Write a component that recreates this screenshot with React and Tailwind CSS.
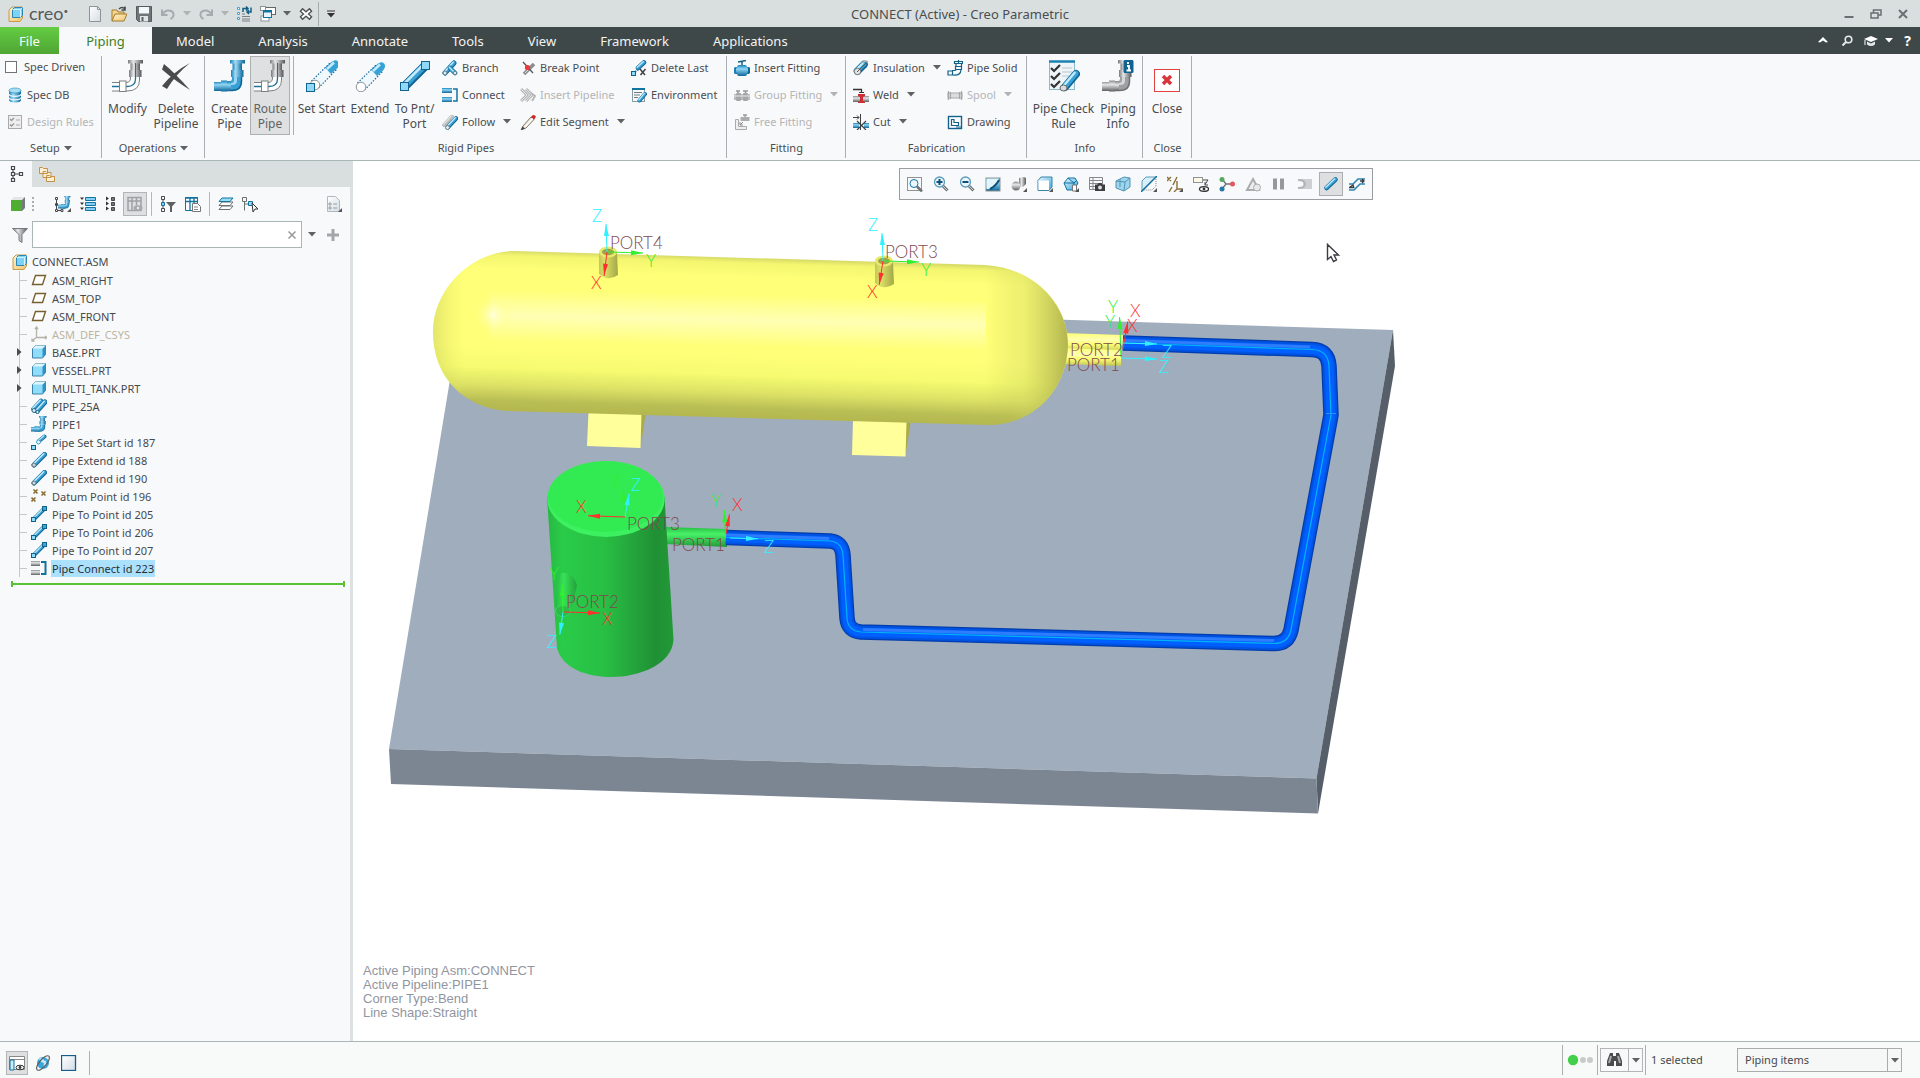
import React from "react";

const C = {
  blue: { d: "#0f6492", m: "#38a0d4", l: "#c4ebfc" },
  gray: { d: "#6f7274", m: "#9da0a2", l: "#eceeef" },
  dim: { d: "#a5a7a8", m: "#c3c5c6", l: "#eceded" },
};

function Svg({ n = 16, className = "w-4 h-4", children }) {
  return (
    <svg viewBox={`0 0 ${n} ${n}`} className={`${className} shrink-0`} fill="none" aria-hidden="true">
      {children}
    </svg>
  );
}
const Big = ({ children }) => (
  <Svg n={32} className="w-8 h-8">
    {children}
  </Svg>
);

function Tube({ x1, y1, x2, y2, w = 5, t = "blue", cap = "round" }) {
  const c = C[t];
  const o = w / 6;
  return (
    <g strokeLinecap={cap}>
      <line x1={x1} y1={y1} x2={x2} y2={y2} stroke={c.d} strokeWidth={w} />
      <line x1={x1 - o / 3} y1={y1 - o / 3} x2={x2 - o / 3} y2={y2 - o / 3} stroke={c.m} strokeWidth={w * 0.72} />
      <line x1={x1 - o} y1={y1 - o} x2={x2 - o} y2={y2 - o} stroke={c.l} strokeWidth={w * 0.28} />
    </g>
  );
}

function Defs() {
  return (
    <svg className="absolute w-0 h-0" aria-hidden="true">
      <defs>
        <linearGradient id="hb">
          <stop offset="0" stopColor="#1a7fb4" />
          <stop offset=".35" stopColor="#9fdcf7" />
          <stop offset="1" stopColor="#0d6799" />
        </linearGradient>
        <linearGradient id="hg">
          <stop offset="0" stopColor="#77797b" />
          <stop offset=".35" stopColor="#e6e7e8" />
          <stop offset="1" stopColor="#555759" />
        </linearGradient>
        <linearGradient id="vb" x2="0" y2="1">
          <stop offset="0" stopColor="#1a7fb4" />
          <stop offset=".35" stopColor="#8fd6f5" />
          <stop offset="1" stopColor="#0d6799" />
        </linearGradient>
        <linearGradient id="vg" x2="0" y2="1">
          <stop offset="0" stopColor="#8a8c8e" />
          <stop offset=".35" stopColor="#e6e7e8" />
          <stop offset="1" stopColor="#5d5f61" />
        </linearGradient>
        <linearGradient id="page" x2="1" y2="1">
          <stop offset="0" stopColor="#fff" />
          <stop offset="1" stopColor="#d3dde5" />
        </linearGradient>
        <linearGradient id="sky" x2="1" y2="1">
          <stop offset="0" stopColor="#e9f7fd" />
          <stop offset="1" stopColor="#35a5dc" />
        </linearGradient>
        <linearGradient id="gold" x2="1" y2="1">
          <stop offset="0" stopColor="#fff3d0" />
          <stop offset="1" stopColor="#f0c56c" />
        </linearGradient>
      </defs>
    </svg>
  );
}

/* ---- large ribbon icons ---- */
const Elbow = ({ t = "blue" }) => {
  const h = t === "blue" ? "url(#hb)" : "url(#hg)";
  const v = t === "blue" ? "url(#vb)" : "url(#vg)";
  const c = C[t];
  return (
    <>
      <path d="M18 17h10v4q0 10-10 10h-5V21h3q2 0 2-2z" fill={c.m} />
      <path d="M20 17h3v4q0 4-5 4h-5v-2h4q3 0 3-3z" fill={c.l} opacity=".7" />
      <path d="M27.500 17v4q0 9.500-10 9.500h-5" stroke={c.d} strokeWidth="1.500" />
      <path d="M0 22h8v9H0zM13 21.500h4V31h-4z" fill={v} />
      <rect x="7" y="20.500" width="6" height="11" fill={v} />
      <rect x="18.500" y="3" width="9.500" height="8" fill={h} />
      <rect x="17" y="10" width="12.500" height="7" fill={h} />
      <rect x="16" y="0" width="15" height="3.500" fill={h} />
    </>
  );
};
const ElbowOutline = () => (
  <>
    <path d="M18 14v4q0 4-4 4H0v9h15q13 0 13-11v-6z" fill="#fff" />
    <path d="M18.500 14v4q0 4.500-4.500 4.500H0M0 31h15q12.500 0 12.500-11v-6" stroke="#7d7f81" />
    <path d="M0 26.500h15q8.500 0 8.500-7.500V3" stroke="#1f7196" strokeWidth="1.300" />
    <rect x="7.500" y="21" width="6.500" height="10.500" fill="#fff" stroke="#7d7f81" />
    <rect x="18.500" y="3" width="9.500" height="8" fill="url(#hg)" />
    <rect x="17" y="10" width="12.500" height="7" fill="url(#hg)" />
    <rect x="16" y="0" width="15" height="3.500" fill="url(#hg)" />
    <path d="M23.500 3v14" stroke="#1f7196" />
  </>
);
const DeletePipeline = () => (
  <Big>
    <path d="M4 4Q15 13 30 30Q14 20 2 9.500Z" fill="#4a4b4d" />
    <path d="M30 3Q16 14 7 29L2 26Q13 12 30 3Z" fill="#4a4b4d" />
  </Big>
);
const ExtendShape = () => (
  <>
    <path d="M3 22L23 3q4-3 6.500-.5t0 6.500L10 29z" fill="#eef8fd" />
    <path d="M17 8.500L23.500 3q4-3 6.500-.5t-.5 6.500L23 15z" fill="#37a2d6" />
    <path d="M19 10L26 3.500" stroke="#c4ebfc" strokeWidth="2.500" />
    <path d="M3.500 22L22 4M10.500 29L29 10" stroke="#1f6fa3" strokeWidth="1.200" strokeDasharray="1.500 1.500" />
    <circle cx="7" cy="26" r="4.800" fill="#fff" stroke="#8b9398" />
  </>
);
const SetStart = () => (
  <Big>
    <g transform="translate(2 -1)">
      <ExtendShape />
    </g>
    <rect x=".5" y="23.500" width="8" height="8" fill="#8fd9fb" stroke="#12628c" />
  </Big>
);
const Extend = () => (
  <Big>
    <g transform="translate(0 1)">
      <ExtendShape />
    </g>
  </Big>
);
const ToPoint = () => (
  <>
    <Tube x1={7} y1={25} x2={26} y2={6} w={9} cap="butt" />
    <rect x="22.500" y="1.500" width="8" height="8" fill="#8fd9fb" stroke="#12628c" />
    <rect x="1.500" y="22.500" width="8" height="8" fill="#8fd9fb" stroke="#12628c" />
  </>
);
const PipeCheck = () => (
  <Big>
    <rect x="1.500" y="1.500" width="25" height="28" fill="#eef5f9" stroke="#8fb8cc" />
    <path d="M1 1.500h26" stroke="#1d82b3" strokeWidth="2.500" />
    <path d="M3 8l3 3 6-6M3 16l3 3 6-6M3 24l3 3 6-6" stroke="#333" strokeWidth="2.200" />
    <path d="M14 8h10M14 16h8M14 12h10" stroke="#b9c6cd" />
    <Tube x1={17} y1={27} x2={28} y2={14} w={8} />
    <ellipse cx="15.500" cy="28" rx="3.500" ry="3" fill="#d9dbdc" stroke="#666" />
  </Big>
);
const PipingInfo = () => (
  <Big>
    <Elbow t="gray" />
    <rect x="21.500" y="0" width="10" height="13" rx="1.500" fill="#0f6291" />
    <path d="M25 6h2v4.500M24.500 10.500h4.500M26 2v2" stroke="#fff" strokeWidth="1.800" />
  </Big>
);
const CloseBox = () => (
  <Big>
    <rect x="3.500" y="9.500" width="25" height="22" fill="#fff" stroke="#e2403f" />
    <path d="M12 16l8 8M20 16l-8 8" stroke="#d9363c" strokeWidth="3.500" />
  </Big>
);

/* ---- small ribbon icons ---- */
const sm = {
  db: (
    <Svg>
      <path d="M2 3v10q0 2.500 6 2.500t6-2.500V3z" fill="url(#hb)" />
      <ellipse cx="8" cy="3.500" rx="6" ry="2.500" fill="#a6def6" stroke="#2b86b3" strokeWidth=".6" />
      <path d="M2 7q0 2.300 6 2.300T14 7M2 10.500q0 2.300 6 2.300t6-2.300" stroke="#e9f6fc" strokeWidth="1.200" />
    </Svg>
  ),
  rules: (
    <Svg>
      <rect x="1.500" y="1.500" width="13" height="13" fill="#eee" stroke="#aaa" />
      <path d="M3 5l1.500 1.500L7 4M3 10.500L4.500 12 7 9.500" stroke="#999" strokeWidth="1.500" />
      <path d="M9 6h4M9 11h4" stroke="#aaa" />
    </Svg>
  ),
  branch: (
    <Svg>
      <Tube x1={3} y1={13} x2={12} y2={3} w={5} />
      <Tube x1={8} y1={8} x2={13} y2={13} w={4.500} />
      <circle cx="3" cy="13" r="2" fill="#dce9ef" stroke="#5c7d8d" />
      <circle cx="13" cy="13" r="1.800" fill="#dce9ef" stroke="#5c7d8d" />
    </Svg>
  ),
  connect: (
    <Svg>
      <rect x="0" y="1" width="10" height="5" fill="url(#vb)" />
      <rect x="0" y="10" width="10" height="5" fill="url(#vb)" />
      <path d="M11 2h4v12h-4" stroke="#12739f" strokeWidth="1.500" />
    </Svg>
  ),
  connectGray: (
    <Svg>
      <rect x="0" y="1" width="9" height="5" fill="url(#vg)" />
      <rect x="0" y="10" width="9" height="5" fill="url(#vg)" />
      <path d="M10 2h4.500v12H10" stroke="#12739f" strokeWidth="2" />
    </Svg>
  ),
  follow: (
    <Svg>
      <Tube x1={2} y1={11} x2={10} y2={2.500} w={3.500} t="dim" />
      <Tube x1={6} y1={13} x2={14} y2={4.500} w={4.500} />
      <circle cx="5.500" cy="13.500" r="2" fill="#e7edf0" stroke="#5c7d8d" />
    </Svg>
  ),
  breakPoint: (
    <Svg>
      <path d="M4 14L14 4" stroke="#8b8d8f" strokeWidth="3.500" />
      <path d="M3 2l10 11" stroke="#555" strokeWidth="1.300" />
      <path d="M5 13l3-3" stroke="#dcdcdc" />
      <circle cx="7.500" cy="7.500" r="2.600" fill="#f0383a" />
    </Svg>
  ),
  insertPipeline: (
    <Svg>
      <path d="M1 2l6 6-6 6M6 2l6 6-6 6" stroke="#b5b7b8" strokeWidth="3" />
      <path d="M1 2l6 6-6 6M6 2l6 6-6 6" stroke="#e4e5e5" />
      <path d="M11 6l4 3-3 5" stroke="#b5b7b8" strokeWidth="2" />
    </Svg>
  ),
  pencil: (
    <Svg>
      <path d="M3 12L11 3l3 2.500L6 14l-5 2z" fill="#e9e2d4" stroke="#6a5a4a" strokeWidth=".8" />
      <path d="M5 13l8-9" stroke="#fff" strokeWidth="1.200" />
      <path d="M1 16l1.500-3.500L5 14.500z" fill="#444" />
      <path d="M11 3q2-3 4-1.500T14 5.500z" fill="#c6282b" />
    </Svg>
  ),
  deleteLast: (
    <Svg>
      <Tube x1={7} y1={8} x2={13} y2={2.500} w={4.500} />
      <path d="M4 12l4-4" stroke="#2b7fae" strokeDasharray="1.500 1" strokeWidth="2" />
      <rect x=".5" y="11.500" width="4" height="4" fill="#8fd9fb" stroke="#12628c" />
      <path d="M9 9l5 6M14.500 9l-5 6" stroke="#3f4142" strokeWidth="1.500" />
    </Svg>
  ),
  environment: (
    <Svg>
      <rect x="1.500" y="1.500" width="12" height="13" fill="#f7fafb" stroke="#8b9ba3" />
      <path d="M1 2h13" stroke="#12739f" strokeWidth="2" />
      <path d="M3 5.500h8M3 8h6M3 10.500h4" stroke="#6c7a80" />
      <Tube x1={8.500} y1={13.500} x2={14} y2={7} w={4} />
    </Svg>
  ),
  insertFitting: (
    <Svg>
      <path d="M4 2l8-1.500M8 1v4" stroke="#155f86" strokeWidth="1.500" />
      <rect x="1" y="7" width="14" height="7" fill="url(#vb)" />
      <rect x="3" y="5" width="10" height="11" rx="2" fill="url(#vb)" />
      <rect x="0" y="7.500" width="2" height="6" fill="#1a7fb4" />
      <rect x="14" y="7.500" width="2" height="6" fill="#0d6799" />
    </Svg>
  ),
  groupFitting: (
    <Svg>
      <path d="M2 4h4M9 4h5M4 4v3M11.500 4v3" stroke="#999" strokeWidth="1.500" />
      <rect x="0" y="7" width="16" height="6" fill="#b9bbbc" />
      <rect x="2" y="6" width="5" height="8" rx="1" fill="#a5a7a8" />
      <rect x="9" y="6" width="5" height="8" rx="1" fill="#a5a7a8" />
      <path d="M0 9h16" stroke="#e8e8e8" />
    </Svg>
  ),
  freeFitting: (
    <Svg>
      <path d="M1.500 5.500h3v7h8v3h-11z" fill="#eee" stroke="#aaa" />
      <path d="M11 1v2M9 1h4" stroke="#999" strokeWidth="1.300" />
      <rect x="6.500" y="3" width="9" height="4" fill="#aaacad" />
      <path d="M6 8v3h3M6 11l3-3" stroke="#888" />
    </Svg>
  ),
  insulation: (
    <Svg>
      <Tube x1={4.500} y1={11} x2={11} y2={4.500} w={7.500} />
      <circle cx="4.500" cy="11.500" r="3.200" fill="#e4e7e9" stroke="#777" />
      <path d="M4 12L14 2" stroke="#555" />
      <path d="M8 3L13 1l2 1" stroke="#aab0b3" strokeWidth="1.500" />
    </Svg>
  ),
  weld: (
    <Svg>
      <path d="M0 2.500h8.500V6" stroke="#333" strokeWidth="1.300" />
      <path d="M6 5.500h5" stroke="#333" />
      <rect x="0" y="9" width="16" height="6" fill="url(#vg)" />
      <path d="M5 7h7v2l-2 1v4l2 1v1H5v-1l2-1v-4L5 9z" fill="#cf2f33" />
    </Svg>
  ),
  cut: (
    <Svg>
      <path d="M0 3.500h6M4 1.500l2 2-2 2M7.500 0v16" stroke="#3f4142" />
      <rect x="0" y="9" width="6" height="5" fill="url(#vb)" />
      <rect x="11" y="9" width="5" height="5" fill="url(#vb)" />
      <path d="M4 7l9 9M13 7l-9 9" stroke="#3f4142" strokeWidth="1.200" />
    </Svg>
  ),
  pipeSolid: (
    <Svg>
      <path d="M7.500 1.500h8v2h-8zM9 3.500v3h5.500v-3M8.500 6.500h6v3h-6zM9 9.500q0 1-2 1H5.500V15q8.500 1 8.500-5.500M1 11h4.500v4H1zM11.500 0v3" stroke="#12628c" strokeWidth="1.200" />
    </Svg>
  ),
  spool: (
    <Svg>
      <rect x="1" y="6" width="14" height="5" fill="#dcddde" stroke="#aaa" />
      <path d="M1.500 4v9M14.500 4v9M3.500 5v7M12.500 5v7" stroke="#a5a7a8" strokeWidth="1.200" />
    </Svg>
  ),
  drawing: (
    <Svg>
      <rect x="1.500" y="2.500" width="13" height="12" fill="#fff" stroke="#12628c" strokeWidth="1.400" />
      <path d="M4.500 5.500h2.500v3h4.500v3h-7zM9 13h5" stroke="#12628c" strokeWidth="1.200" />
    </Svg>
  ),
};

/* ---- ribbon building blocks ---- */
const Caret = ({ light }) => (
  <svg viewBox="0 0 8 5" className={`w-2 h-[5px] shrink-0 ${light ? "text-[#b0b2b3]" : "text-[#5f6162]"}`} aria-hidden="true">
    <path d="M0 0h8L4 4.500z" fill="currentColor" />
  </svg>
);

const Large = ({ icon, lines, w, active }) => (
  <button
    type="button"
    className={`mt-0.5 h-[79px] pt-[3px] flex flex-col items-center border shrink-0 text-xs ${w} ${
      active ? "bg-[#dfe0e1] border-[#adafb0] text-[#606364]" : "border-transparent"
    }`}
  >
    {icon}
    <span className="mt-[9px] leading-[15px] whitespace-nowrap">
      {lines.map((l) => (
        <span key={l} className="block">
          {l}
        </span>
      ))}
    </span>
  </button>
);

const Small = ({ icon, label, caret, off }) => (
  <button type="button" disabled={off} className={`h-[27px] flex items-center gap-1 whitespace-nowrap ${off ? "text-[#b3b5b6]" : ""}`}>
    {icon}
    <span>{label}</span>
    {caret && (
      <span className="ml-1">
        <Caret light={off} />
      </span>
    )}
  </button>
);

const Group = ({ name, w, caret, children }) => (
  <section className={`relative shrink-0 flex flex-col ${w}`} aria-label={name}>
    <div className="h-[83px] flex items-start">{children}</div>
    <div className="h-6 flex items-center justify-center gap-1">
      {name}
      {caret && <Caret />}
    </div>
    <span className="absolute right-0 top-0.5 bottom-0.5 w-px bg-[#aaaeb0]" />
  </section>
);
const Col = ({ w, children }) => <div className={`flex flex-col items-start shrink-0 ${w}`}>{children}</div>;

function Ribbon() {
  return (
    <div className="flex bg-[#f8f9fb] border-b border-[#a8b7b5] h-[107px]">
      <Group name="Setup" w="w-[102px]" caret>
        <div className="flex flex-col items-start pl-[5px]">
          <label className="h-[25px] flex items-center gap-[7px] whitespace-nowrap">
            <input type="checkbox" className="appearance-none w-3 h-3 border border-[#707476] bg-white" />
            Spec Driven
          </label>
          <div className="pl-0.5 pt-0.5">
            <Small icon={sm.db} label="Spec DB" />
            <Small icon={sm.rules} label="Design Rules" off />
          </div>
        </div>
      </Group>
      <Group name="Operations" w="w-[103px]" caret>
        <Large icon={<Big><ElbowOutline /></Big>} lines={["Modify"]} w="w-[51px]" />
        <Large icon={<DeletePipeline />} lines={["Delete", "Pipeline"]} w="w-[46px]" />
      </Group>
      <Group name="Rigid Pipes" w="w-[522px]">
        <div className="flex pl-1 h-full">
          <Large icon={<Big><Elbow /></Big>} lines={["Create", "Pipe"]} w="w-[41px]" />
          <Large icon={<Big><ElbowOutline /></Big>} lines={["Route", "Pipe"]} w="w-[40px]" active />
          <span className="w-px h-[79px] mt-0.5 ml-[3px] bg-[#aaaeb0]" />
          <Large icon={<SetStart />} lines={["Set Start"]} w="w-[55px]" />
          <Large icon={<Extend />} lines={["Extend"]} w="w-[42px]" />
          <Large icon={<Big><ToPoint /></Big>} lines={["To Pnt/", "Port"]} w="w-[47px]" />
        </div>
        <Col w="w-[78px] ml-1">
          <Small icon={sm.branch} label="Branch" />
          <Small icon={sm.connect} label="Connect" />
          <Small icon={sm.follow} label="Follow" caret />
        </Col>
        <Col w="w-[111px]">
          <Small icon={sm.breakPoint} label="Break Point" />
          <Small icon={sm.insertPipeline} label="Insert Pipeline" off />
          <Small icon={sm.pencil} label="Edit Segment" caret />
        </Col>
        <Col w="w-[92px]">
          <Small icon={sm.deleteLast} label="Delete Last" />
          <Small icon={sm.environment} label="Environment" />
        </Col>
      </Group>
      <Group name="Fitting" w="w-[119px]">
        <div className="pl-[7px]">
          <Small icon={sm.insertFitting} label="Insert Fitting" />
          <Small icon={sm.groupFitting} label="Group Fitting" caret off />
          <Small icon={sm.freeFitting} label="Free Fitting" off />
        </div>
      </Group>
      <Group name="Fabrication" w="w-[181px]">
        <div className="flex pl-[7px]">
          <Col w="w-[94px]">
            <Small icon={sm.insulation} label="Insulation" caret />
            <Small icon={sm.weld} label="Weld" caret />
            <Small icon={sm.cut} label="Cut" caret />
          </Col>
          <Col w="w-[79px]">
            <Small icon={sm.pipeSolid} label="Pipe Solid" />
            <Small icon={sm.spool} label="Spool" caret off />
            <Small icon={sm.drawing} label="Drawing" />
          </Col>
        </div>
      </Group>
      <Group name="Info" w="w-[116px]">
        <Large icon={<PipeCheck />} lines={["Pipe Check", "Rule"]} w="w-[73px]" />
        <Large icon={<PipingInfo />} lines={["Piping", "Info"]} w="w-[36px]" />
      </Group>
      <Group name="Close" w="w-[49px]">
        <Large icon={<CloseBox />} lines={["Close"]} w="w-[48px]" />
      </Group>
    </div>
  );
}

/* ---- title bar ---- */
const QBtn = ({ w = "w-6", label, children }) => (
  <button type="button" aria-label={label} className={`h-full flex items-center justify-center ${w}`}>
    {children}
  </button>
);
const AsmIcon = () => (
  <Svg>
    <path d="M1 4l3-3h10.500v11L12 15.500H1z" fill="url(#gold)" stroke="#c79a4e" />
    <path d="M4.500 3.500l2-2h8v8l-2 2h-8z" fill="#7fd2f7" stroke="#2e86b3" />
    <path d="M4.500 3.500h8v8M12.500 3.500l2-2" stroke="#d6f3fe" />
  </Svg>
);

function TitleBar() {
  return (
    <header className="h-[27px] bg-[#d9dfdf] grid grid-cols-[1fr_auto_1fr] items-center text-[#4a4e50]">
      <div className="flex h-full items-center pl-2">
        <AsmIcon />
        <span className="ml-[5px] w-[54px] text-[18px] leading-[24px] pb-0.5 font-['Lato'] text-[#555a5c]">creo<sup className="text-[8px] -top-1.5">•</sup></span>
        <QBtn label="New">
          <Svg>
            <path d="M2.500.5h8l3 3v12h-11z" fill="url(#page)" stroke="#8d9496" />
            <path d="M10.500.5v3h3" stroke="#8d9496" />
          </Svg>
        </QBtn>
        <QBtn label="Open">
          <Svg>
            <path d="M1 15V4h5l1 2h6v2" fill="#f6d68f" stroke="#a37a2c" />
            <path d="M1 15l3-7h12l-3 7z" fill="url(#gold)" stroke="#a37a2c" />
            <path d="M8 3q3-3 6 0M14 .5V4h-3.500" stroke="#44484a" strokeWidth="1.500" />
          </Svg>
        </QBtn>
        <QBtn label="Save" w="w-[25px]">
          <Svg>
            <path d="M.5.5h15v15h-13l-2-2z" fill="#6f7678" stroke="#565c5e" />
            <rect x="3" y="1" width="10" height="6.500" fill="#f4f8fa" />
            <rect x="4" y="10" width="8" height="5.500" fill="#e2e5e6" />
            <rect x="5.500" y="11" width="2" height="4" fill="#5a6062" />
          </Svg>
        </QBtn>
        <QBtn label="Undo">
          <Svg><path d="M2 3.500v5.500h5.500M2.500 8.500Q5 4 9 4.500q5 .5 4.500 5-.5 2.500-3 3.500" stroke="#a6acad" strokeWidth="2" /></Svg>
        </QBtn>
        <QBtn label="Undo history" w="w-[14px]"><Caret light /></QBtn>
        <QBtn label="Redo">
          <Svg><path d="M14 3.500v5.500H8.500M13.500 8.500Q11 4 7 4.500q-5 .5-4.500 5 .5 2.500 3 3.500" stroke="#a6acad" strokeWidth="2" /></Svg>
        </QBtn>
        <QBtn label="Redo history" w="w-[14px]"><Caret light /></QBtn>
        <QBtn label="Regenerate">
          <Svg>
            <path d="M1.500 1.500h2v2h-2zM1.500 6.500h2v2h-2zM1.500 11.500h2v2h-2z" fill="#fff" stroke="#4aa3cc" />
            <path d="M6 10.500h8M6 13h8M6 8h3M6 15h8" stroke="#7b8183" />
            <path d="M7 6V2.500h4M10 .5l2 2-2 2M15 1.500V6h-3M13 4l-2 2 2 2" stroke="#155f86" strokeWidth="1.500" />
          </Svg>
        </QBtn>
        <QBtn label="Windows">
          <Svg>
            <rect x="5.500" y="1.500" width="10" height="7" fill="#fff" stroke="#62686a" />
            <rect x="1" y="10" width="8" height="5" fill="#fff" stroke="#8d9496" />
            <rect x=".5" y=".5" width="5" height="4" fill="#fff" stroke="#8d9496" />
            <rect x="3.500" y="4.500" width="8" height="7" fill="#e5f5fc" stroke="#12739f" />
            <path d="M3 5.500h9" stroke="#12739f" strokeWidth="2" />
          </Svg>
        </QBtn>
        <QBtn label="Window list" w="w-[14px]"><Caret /></QBtn>
        <QBtn label="Close window">
          <Svg>
            <path d="M3 3.500l10 9M13 3.500l-10 9" stroke="#4a4e50" strokeWidth="4.500" />
            <path d="M4 4.500l8 7M12 4.500l-8 7" stroke="#fff" strokeWidth="2" />
          </Svg>
        </QBtn>
        <span className="w-px h-6 bg-[#a4abab]" />
        <QBtn label="Customize toolbar">
          <svg viewBox="0 0 10 8" className="w-2.5 h-2" aria-hidden="true"><path d="M1 1h8" stroke="#333" /><path d="M1 3h8L5 7.500z" fill="#333" /></svg>
        </QBtn>
      </div>
      <h1 className="text-[13px]">CONNECT (Active) - Creo Parametric</h1>
      <div className="flex h-full justify-end pr-1">
        <QBtn label="Minimize" w="w-[27px]"><svg viewBox="0 0 12 12" className="w-3 h-3"><path d="M1.500 9h9" stroke="#6a6f71" strokeWidth="2" /></svg></QBtn>
        <QBtn label="Restore" w="w-[27px]"><svg viewBox="0 0 12 12" className="w-3 h-3" fill="none" stroke="#6a6f71" strokeWidth="1.500"><path d="M1 5h7v5H1zM3.500 5V2H11v5H8" /></svg></QBtn>
        <QBtn label="Close" w="w-[27px]"><svg viewBox="0 0 12 12" className="w-3 h-3"><path d="M2 2l8 8M10 2l-8 8" stroke="#6a6f71" strokeWidth="2" /></svg></QBtn>
      </div>
    </header>
  );
}

function TabBar() {
  const tabs = ["Model", "Analysis", "Annotate", "Tools", "View", "Framework", "Applications"];
  return (
    <nav className="h-[27px] bg-[#3f4849] flex items-stretch text-[13px] text-[#f2f4f4]">
      <button type="button" className="w-[59px] bg-linear-to-b from-[#64cc42] to-[#4fa635] text-white">File</button>
      <button type="button" className="w-[93px] mr-0.5 bg-[#f8f9fb] text-[#3f7d24]">Piping</button>
      {tabs.map((t) => (
        <button type="button" key={t} className="px-[22px]">{t}</button>
      ))}
      <div className="ml-auto flex items-center text-white">
        <QBtn label="Collapse ribbon"><svg viewBox="0 0 12 12" className="w-3 h-3"><path d="M1 7l5-5 5 5-2 .5-3-2-3 2z" fill="#fff" /></svg></QBtn>
        <QBtn label="Search"><svg viewBox="0 0 12 12" className="w-3 h-3" fill="none" stroke="#e8ebeb" strokeWidth="1.600"><circle cx="7.500" cy="4.500" r="3.300" /><path d="M5 7L1.500 10.500" strokeWidth="2" /></svg></QBtn>
        <QBtn label="Learning"><svg viewBox="0 0 14 12" className="w-3.5 h-3"><path d="M7 1l7 3-7 3-7-3z" fill="#fff" /><path d="M3 6.500v3q4 3 8 0v-3L7 8.500z" fill="#e3e6e6" /><path d="M1 5v5" stroke="#fff" /></svg></QBtn>
        <QBtn label="Learning options" w="w-3"><svg viewBox="0 0 8 5" className="w-2 h-[5px]"><path d="M0 0h8L4 4.500z" fill="#fff" /></svg></QBtn>
        <QBtn label="Help" w="w-[25px]"><b className="text-sm">?</b></QBtn>
      </div>
    </nav>
  );
}

/* ---- model tree ---- */
const PlaneIcon = () => <Svg><path d="M4.500 3.500h10L11.500 12.500h-10z" fill="#fff" stroke="#77602f" strokeWidth="1.400" /></Svg>;
const CsysIcon = () => <Svg><path d="M5.500 1v10.500H16M5.500 11.500L.5 15M4 3l1.500-2L7 3M14 10l2 1.500-2 1.500M1 12.500V15h2.500" stroke="#b3b1a8" strokeWidth="1.300" /></Svg>;
const PartIcon = () => (
  <Svg>
    <path d="M1.500 4.500l3-3h10v9l-3 3.500h-10z" fill="#8fdcfb" stroke="#3b83a6" />
    <path d="M11.500 4.500l3-3v9l-3 3.500z" fill="#2e94c6" />
    <path d="M1.500 4.500l3-3h10l-3 3z" fill="#dff5fe" />
  </Svg>
);
const Pipe25 = () => (
  <Svg>
    <Tube x1={2.500} y1={11} x2={10} y2={3} w={4.500} />
    <Tube x1={6} y1={13} x2={14} y2={4} w={5} />
    <circle cx="3" cy="12.500" r="2" fill="#d8ecf5" stroke="#25688a" />
    <circle cx="6.500" cy="14" r="1.600" fill="#d8ecf5" stroke="#25688a" />
  </Svg>
);
const TreeExtend = () => (
  <Svg>
    <Tube x1={3} y1={13} x2={13.500} y2={2.500} w={5} />
    <circle cx="3" cy="13" r="2" fill="#c9d3d8" stroke="#6a7a82" />
  </Svg>
);
const TreeStart = () => (
  <Svg>
    <Tube x1={8} y1={7} x2={13.500} y2={2.500} w={4} />
    <circle cx="7.500" cy="8" r="2" fill="#e3f4fb" stroke="#4a9cc4" />
    <rect x=".5" y="11.500" width="4" height="4" fill="#8fd9fb" stroke="#12628c" />
  </Svg>
);
const TreeToPoint = () => (
  <Svg>
    <Tube x1={3} y1={13} x2={13} y2={3} w={4} cap="butt" />
    <rect x=".5" y="11.500" width="4" height="4" fill="#8fd9fb" stroke="#12628c" />
    <rect x="11.500" y=".5" width="4" height="4" fill="#3fa6d8" stroke="#12628c" />
  </Svg>
);
const DatumPts = () => <Svg><path d="M2.500 1.500l4 4M6.500 1.500l-4 4M10.500 3.500l4 4M14.500 3.500l-4 4M.5 9.500l4 4M4.500 9.500l-4 4" stroke="#8a6f35" strokeWidth="1.600" /></Svg>;
const TreePipe = () => <Svg n={32}><Elbow /></Svg>;

const nodes = [
  ["ASM_RIGHT", <PlaneIcon />],
  ["ASM_TOP", <PlaneIcon />],
  ["ASM_FRONT", <PlaneIcon />],
  ["ASM_DEF_CSYS", <CsysIcon />, "dim"],
  ["BASE.PRT", <PartIcon />, "open"],
  ["VESSEL.PRT", <PartIcon />, "open"],
  ["MULTI_TANK.PRT", <PartIcon />, "open"],
  ["PIPE_25A", <Pipe25 />],
  ["PIPE1", <TreePipe />],
  ["Pipe Set Start id 187", <TreeStart />],
  ["Pipe Extend id 188", <TreeExtend />],
  ["Pipe Extend id 190", <TreeExtend />],
  ["Datum Point id 196", <DatumPts />],
  ["Pipe To Point id 205", <TreeToPoint />],
  ["Pipe To Point id 206", <TreeToPoint />],
  ["Pipe To Point id 207", <TreeToPoint />],
  ["Pipe Connect id 223", sm.connectGray, "sel"],
];

const PBtn = ({ label, w = "w-6", active, children }) => (
  <button
    type="button"
    aria-label={label}
    className={`h-6 flex items-center justify-center shrink-0 border ${w} ${active ? "bg-[#dedfe1] border-[#b3b5b7]" : "border-transparent"}`}
  >
    {children}
  </button>
);
const Corner = () => <path d="M16 12v4h-4z" fill="#555" />;

function SidePanel() {
  return (
    <aside className="w-[353px] shrink-0 bg-[#f8f9fb] border-r-[3px] border-[#dbe2e1] flex flex-col">
      <div className="flex h-[26px] bg-[#d9dfdf] -mr-[3px]">
        <button type="button" aria-label="Model tree" className="w-8 bg-[#f8f9fb] flex items-center justify-center">
          <Svg>
            <path d="M3.500.5h3v3h-3zM3.500 6.500h3v3h-3zM3.500 12.500h3v3h-3zM11.500 6.500h3v3h-3zM5 3.500v3M5 9.500v3M6.500 8h5" stroke="#44484a" strokeWidth="1.200" />
          </Svg>
        </button>
        <button type="button" aria-label="Folder browser" className="w-[30px] flex items-center justify-center">
          <Svg>
            <path d="M.5 1.500h3l1 1h4v5h-8zM4 5.500h3l1 1h4v5H4zM7.500 9.500h3l1 1h4v5h-8z" fill="#fdf0d4" stroke="#c39045" />
          </Svg>
        </button>
      </div>
      <div className="flex h-[34px] items-center pl-[6px] pr-1">
        <PBtn label="Display"><Svg><path d="M1 4h11v11H1z" fill="#4fae31" /><path d="M1 4l3-3h11l-3 3z" fill="#e3e5e6" /><path d="M12 4l3-3v11l-3 3z" fill="#75797b" /></Svg></PBtn>
        <span className="w-1.5 flex justify-center"><svg viewBox="0 0 2 16" className="w-0.5 h-4"><path d="M1 1v15" stroke="#a9adae" strokeWidth="2" strokeDasharray="2 2" /></svg></span>
        <span className="w-[15px]" />
        <PBtn label="Piping tree">
          <Svg>
            <path d="M.5 1.500h2v2h-2zM.5 7.500h2v2h-2zM.5 13.500h2v2h-2zM6 13.500h2v2H6zM1.500 3.500v10M2.500 14.500H6" stroke="#44484a" />
            <g transform="translate(3 0) scale(.4)"><Elbow /></g>
            <Corner />
          </Svg>
        </PBtn>
        <PBtn label="Expand all" w="w-[26px]"><Svg><path d="M5.500 1.500h10v3h-10zM5.500 6.500h10v3h-10zM5.500 11.500h10v3h-10z" fill="#7fd0f4" stroke="#12739f" /><path d="M0 1.500h4L2 4zM0 6.500h4L2 9zM0 11.500h4L2 14z" fill="#333" /></Svg></PBtn>
        <PBtn label="Collapse all" w="w-[22px]"><Svg><path d="M7.500 1.500h3v3h-3zM7.500 6.500h3v3h-3zM7.500 11.500h3v3h-3z" fill="#777" stroke="#44484a" /><path d="M2 .5l3 2-3 2zM2 5.500l3 2-3 2zM2 10.500l3 2-3 2z" fill="#333" /></Svg></PBtn>
        <PBtn label="Show columns" active><Svg><path d="M1 1.500h13v13H1zM1 5h13M5 1.500v13M9.500 1.500v8" stroke="#9fa2a4" strokeWidth="1.500" /><ellipse cx="11" cy="12" rx="4.500" ry="2.800" fill="#a6a9ab" /><circle cx="11" cy="12" r="1.200" fill="#eee" /></Svg></PBtn>
        <span className="w-px h-6 bg-[#b3b8ba] mx-1" />
        <PBtn label="Tree filters"><Svg><path d="M1.500.5h3v3h-3zM1.500 12.500h3v3h-3zM3 3.500v3M3 9.500v3" stroke="#44484a" /><path d="M1.500 6.500h3v3h-3z" fill="#7fd0f4" stroke="#12739f" /><path d="M6 6h10l-4 4.500V16h-2v-5.500z" fill="#5d6163" /></Svg></PBtn>
        <PBtn label="Tree columns" w="w-[26px]"><Svg><path d="M.5 1.500h12v13H.5z" fill="#fff" stroke="#12739f" /><path d="M0 2h13M.5 5.500h12M5 2v13M9 2v13" stroke="#12739f" strokeWidth="1.300" /><path d="M7.500 7.500h5l3 3v5h-8z" fill="#fff" stroke="#777" /><path d="M9 11h4M9 13.500h4" stroke="#888" /></Svg></PBtn>
        <span className="w-px h-6 bg-[#b3b8ba] mr-1 ml-[3px]" />
        <PBtn label="Layers"><Svg><path d="M1 13.500l3-3.500h11l-3 3.500zM1 9.500L4 6h11l-3 3.500z" fill="#fff" stroke="#6b7072" /><path d="M1 5.500L4 2h11l-3 3.500z" fill="#9bdcf7" stroke="#12739f" /></Svg></PBtn>
        <PBtn label="Select"><Svg><path d="M.5 1.500h4v4h-4zM2.500 5.500v9M2.500 8h4" stroke="#6b7072" /><path d="M6.500 5.500h4v4h-4z" fill="#9bdcf7" stroke="#12739f" /><path d="M10 7l6 6h-3l-2 3z" fill="#fff" stroke="#333" /></Svg></PBtn>
        <span className="grow" />
        <PBtn label="Settings"><Svg><path d="M1.500.5h8l4 4v11h-12z" fill="url(#page)" stroke="#b0b8bc" /><path d="M3 7h2v2H3zM3 11h2v2H3zM7 8h4M7 12h4" stroke="#9aa1a5" /><Corner /></Svg></PBtn>
      </div>
      <div className="flex items-center h-[27px] pl-3 pr-2.5">
        <Svg className="w-4 h-4 mr-1"><path d="M.5 1.500h15l-5.500 6v8l-3-2v-6z" fill="url(#hg)" stroke="#777b7d" /></Svg>
        <div className="flex grow items-center border border-[#a8b7b5] bg-white h-[27px] mr-1">
          <input type="text" aria-label="Filter tree" className="grow min-w-0 h-full px-1 outline-none" />
          <button type="button" aria-label="Clear" className="w-3.5 flex"><svg viewBox="0 0 10 10" className="w-2.5 h-2.5"><path d="M1.500 1.500l7 7M8.500 1.500l-7 7" stroke="#999" strokeWidth="1.500" /></svg></button>
        </div>
        <QBtn label="Filter options" w="w-[11px]"><Caret /></QBtn>
        <span className="w-2" />
        <QBtn label="Add filter" w="w-[15px]"><svg viewBox="0 0 12 12" className="w-3 h-3"><path d="M6 0v12M0 6h12" stroke="#a3a6a8" strokeWidth="3" /></svg></QBtn>
      </div>
      <ul className="mt-[5px] text-[#47494b]">
        <li className="h-[18px] flex items-center pl-3 gap-1"><AsmIcon />CONNECT.ASM</li>
        {nodes.map(([t, icon, k]) => (
          <li key={t} className="h-[18px] flex items-center pl-[19px] whitespace-nowrap">
            <span className="w-2 h-full border-l border-[#c5c7c8] flex items-center">
              {k === "open" ? (
                <svg viewBox="0 0 5 8" className="w-[5px] h-2 -ml-[3px]"><path d="M0 0v8l4.500-4z" fill="#4a4d4f" /></svg>
              ) : (
                <span className="w-2 h-px bg-[#c5c7c8]" />
              )}
            </span>
            <span className="w-1" />
            {icon}
            <span className={`ml-1 px-px h-[17px] leading-[17px] ${k === "dim" ? "text-[#bbb59f]" : ""} ${k === "sel" ? "bg-[#ace1fd] text-[#26303a]" : ""}`}>{t}</span>
          </li>
        ))}
      </ul>
      <div className="mt-1 ml-[11px] mr-[5px] h-1.5 flex items-center border-x-2 border-[#5bc238]"><span className="h-0.5 w-full bg-[#5bc238]" /></div>
    </aside>
  );
}

/* ---- graphics area ---- */
const Mag = ({ sign }) => (
  <Svg>
    <path d="M9.500 9.500l5 5" stroke="#6d7275" strokeWidth="3" />
    <path d="M10 10l4.500 4.500" stroke="#cfd3d5" />
    <circle cx="6.500" cy="6" r="5" fill="#eaf6fc" stroke="#5d9dbb" strokeWidth="1.300" />
    <path d={sign === "+" ? "M3.500 6h6M6.500 3v6" : "M3.500 6h6"} stroke="#0f4f78" strokeWidth="2" />
  </Svg>
);
const viewTools = [
  ["Refit", <Svg><rect x=".5" y="1.500" width="14" height="13" stroke="#8d9396" /><circle cx="7" cy="7.500" r="4" fill="#eaf6fc" stroke="#12739f" /><path d="M10 10.500l5 5" stroke="#6d7275" strokeWidth="2.500" /></Svg>],
  ["Zoom In", <Mag sign="+" />],
  ["Zoom Out", <Mag sign="-" />],
  ["Repaint", <Svg><rect x="1" y="2" width="14" height="13" fill="url(#vb)" stroke="#8d9396" /><path d="M1.500 2.500H14Q12 14 1.500 13z" fill="#e3f4fb" /><path d="M5 13Q11 10 14 4" stroke="#0f4f78" strokeWidth="2" /></Svg>],
  ["Rendering", <Svg><path d="M8 2l5-1 2 1v6l-3 3-4-1z" fill="url(#hg)" /><circle cx="5" cy="10" r="4.500" fill="url(#vg)" /><Corner /></Svg>],
  ["Display Style", <Svg><path d="M1 4.500L4 1h11v10l-3 3.500H1z" fill="url(#sky)" stroke="#3b83a6" /><path d="M1.500 4.500H12V14H1.500z" fill="#fff" /><Corner /></Svg>],
  ["Saved Orientations", <Svg><path d="M1 7l4-5h7l3 5-4 7H4z" fill="url(#sky)" stroke="#12739f" /><path d="M1 7h10l3-3M5 2l6 5v6" stroke="#12739f" /><path d="M9.500 9h4v6h-4z" fill="#fff" stroke="#777" /><Corner /></Svg>],
  ["View Manager", <Svg><path d="M.5 1.500h13v12H.5zM.5 4.500h13M.5 7.500h13M.5 10.500h8M4 1.500v12" stroke="#85898b" /><path d="M6 8.500h2.500l1-1.500h3l1 1.500H16v6.500H6z" fill="#3b3e40" /><circle cx="11" cy="11.500" r="2" fill="#ddd" /></Svg>],
  ["Perspective", <Svg><path d="M1 5l8-4 6 1v9l-6 4-8-3z" fill="#9fd4ec" stroke="#4f94b4" /><path d="M1 5l9 1 5-4M10 6l-1 9M5 3v8" stroke="#4f94b4" /></Svg>],
  ["Sections", <Svg><path d="M1 5l4-4h10L1 15z" fill="#d8effa" stroke="#5d9dbb" /><path d="M15 1v9l-4 4H1z" stroke="#888" strokeDasharray="1 1" /><path d="M0 16L16 0" stroke="#12739f" strokeWidth="1.500" /><Corner /></Svg>],
  ["Datum Display", <Svg><path d="M0 1l4 4M4 1L0 5M10 1L6 9M5 11l-3 5M10 5v8h5M10 13l-3 3" stroke="#8a6f35" strokeWidth="1.400" /><Corner /></Svg>],
  ["Annotation Display", <Svg><rect x=".5" y="1.500" width="9" height="5" fill="#fff8e4" stroke="#8d9396" /><path d="M10 4h5L12 8.500M12 6v3h3" stroke="#44484a" /><ellipse cx="11" cy="13" rx="4.500" ry="2.300" fill="#fff" stroke="#333" strokeWidth="1.300" /><circle cx="11" cy="13" r="1.400" fill="#333" /></Svg>],
  ["Spin Center", <Svg><path d="M3 3l4 5h7M7 8l-4 5" stroke="#6d7275" strokeWidth="1.300" /><circle cx="3" cy="3.500" r="2.500" fill="#55a85c" /><circle cx="13.500" cy="8" r="2.500" fill="#e0595d" /><circle cx="3" cy="13" r="2.500" fill="#2878a8" /></Svg>],
  ["Simulate", <Svg><path d="M8 3l6 11H2z" fill="#eee" stroke="#aaadaf" strokeWidth="2" /><circle cx="12" cy="11.500" r="3.500" fill="#e8e8e8" stroke="#aaadaf" /></Svg>],
  ["Pause", <Svg><path d="M2 2.500h4v11H2zM9 2.500h4v11H9z" fill="#96999b" /></Svg>],
  ["Stop", <Svg><path d="M1 3h14v10H1l5-2V6z" fill="#cdd0d1" /><path d="M1 4q7 0 7 4t-7 4" stroke="#b3b6b8" strokeWidth="2" /></Svg>],
  ["Solid Pipe", <Svg><Tube x1={3.500} y1={12} x2={12.500} y2={3.500} w={4.500} /></Svg>],
  ["Flow Direction", <Svg><path d="M0 8h4l5-5h7M0 14h5l6-6h5" stroke="#2c86b5" strokeWidth="1.600" /><path d="M1 11l3-2 1 3M5 11.500H0M11 5h4M13 3l2 2-2 2" stroke="#3b3e40" strokeWidth="1.300" /></Svg>],
];

const Arrow = ({ x, y, a, c, n = 34 }) => (
  <g transform={`translate(${x} ${y}) rotate(${a})`}>
    <path d={`M0 0H${n}`} stroke={c} />
    <path d={`M${n - 12} -2.500L${n} 0L${n - 12} 2.500z`} fill={c} />
  </g>
);
const R = "#ff3030", G = "#30f030", Z = "#30f0ff", M = "#7d4a50";
const T = ({ x, y, c, children }) => (
  <text x={x} y={y} fill={c}>{children}</text>
);

const run = "M726 537.500L830 541Q842 542 843 555L847 618Q848 631 861 632L1274 643.500Q1288 643.500 1291 630L1331 415L1329 366Q1328 350 1312 349.500L1123 343";

function Scene() {
  return (
    <svg viewBox="353 161 1567 880" preserveAspectRatio="xMinYMin meet" className="absolute inset-0 w-full h-full" role="img" aria-label="Piping assembly model" fill="none">
      <defs>
        <linearGradient id="ves" gradientUnits="userSpaceOnUse" x1="515" y1="251" x2="510" y2="411">
          <stop offset="0" stopColor="#d8dc66" />
          <stop offset=".03" stopColor="#f4f670" />
          <stop offset=".12" stopColor="#ffff78" />
          <stop offset=".6" stopColor="#ffff78" />
          <stop offset=".73" stopColor="#f6fb70" />
          <stop offset=".84" stopColor="#dde266" />
          <stop offset=".94" stopColor="#b8bd54" />
          <stop offset="1" stopColor="#b3b74e" />
        </linearGradient>
        <linearGradient id="shine" gradientUnits="userSpaceOnUse" x1="515" y1="290" x2="514" y2="342">
          <stop offset="0" stopColor="#ffffb8" stopOpacity="0" />
          <stop offset=".5" stopColor="#ffffb4" />
          <stop offset="1" stopColor="#ffffb8" stopOpacity="0" />
        </linearGradient>
        <radialGradient id="spot"><stop offset="0" stopColor="#ffffd8" /><stop offset="1" stopColor="#ffff80" stopOpacity="0" /></radialGradient>
        <linearGradient id="capR">
          <stop offset="0" stopColor="#b3b74e" stopOpacity="0" />
          <stop offset=".45" stopColor="#c6cb5a" stopOpacity=".3" />
          <stop offset="1" stopColor="#aeb24c" />
        </linearGradient>
        <linearGradient id="capL">
          <stop offset="0" stopColor="#c0c556" stopOpacity=".5" />
          <stop offset="1" stopColor="#e0e468" stopOpacity="0" />
        </linearGradient>
        <linearGradient id="port"><stop offset="0" stopColor="#c4c85a" /><stop offset=".3" stopColor="#dde066" /><stop offset="1" stopColor="#a3a746" /></linearGradient>
        <linearGradient id="noz" x2="0" y2="1"><stop offset="0" stopColor="#fdff74" /><stop offset=".35" stopColor="#ffffb0" /><stop offset=".6" stopColor="#fcff74" /><stop offset="1" stopColor="#c0c456" /></linearGradient>
        <linearGradient id="tank"><stop offset="0" stopColor="#27b842" /><stop offset=".12" stopColor="#2acb49" /><stop offset=".45" stopColor="#28bf44" /><stop offset=".68" stopColor="#24a53c" /><stop offset=".86" stopColor="#209034" /><stop offset="1" stopColor="#229a38" /></linearGradient>
        <linearGradient id="stub"><stop offset="0" stopColor="#27b842" /><stop offset=".4" stopColor="#36e256" /><stop offset="1" stopColor="#249f3c" /></linearGradient>
        <linearGradient id="gnoz" x2="0" y2="1"><stop offset="0" stopColor="#27bd42" /><stop offset=".35" stopColor="#48f268" /><stop offset="1" stopColor="#219a39" /></linearGradient>
        <clipPath id="vc"><path d="M515 251L985 265C1034 268 1068 303 1068 346C1066 392 1032 425 988 425L508 411C462 408 432 375 433 330C434 288 472 251 515 251z" /></clipPath>
      </defs>
      <path d="M463 301L1393 330L1316.500 778.500L389 749z" fill="#a0adbd" />
      <path d="M1393 330L1395 366L1318 813.500L1316.500 778.500z" fill="#565f69" />
      <path d="M389 749L1316.500 778.500L1318 813.500L391 784z" fill="#7c8693" />

      <path d="M641 414L645.500 415L640.500 448z" fill="#a9ac48" />
      <path d="M588.500 412L641.500 413.500L640.500 448L587 446z" fill="#ffff9c" />
      <path d="M906 422L910.500 423L905.500 456z" fill="#a9ac48" />
      <path d="M853 420L906.500 422L905.500 456.500L852 455z" fill="#ffff9c" />

      <path d="M1062 333L1123 335L1122 350L1062 352z" fill="url(#noz)" />
      <path d="M1060 348L1121 350V366L1060 364z" fill="url(#noz)" />
      <g clipPath="url(#vc)">
        <rect x="430" y="245" width="640" height="185" fill="url(#ves)" />
        <path d="M490 288L986 303V357L490 342z" fill="url(#shine)" />
        <rect x="430" y="245" width="35" height="185" fill="url(#capL)" />
        <rect x="986" y="245" width="84" height="185" fill="url(#capR)" />
        <circle cx="493" cy="315" r="20" fill="url(#spot)" />
      </g>
      {[[12, 0], [288, 9]].map(([dx, dy]) => (
        <g key={dx} transform={`translate(${dx} ${dy})`}>
          <path d="M587 253V274Q596 282 606 275L605 253z" fill="url(#port)" />
          <ellipse cx="596" cy="252" rx="9" ry="5.500" fill="#e6e96c" />
          <ellipse cx="596" cy="252" rx="6" ry="3.200" fill="#9fa346" />
        </g>
      ))}

      <path d="M664 527L727 529V547L664 544z" fill="url(#gnoz)" />
      <path d="M547 497L557 648C562 668 586 677 611 677C640 677 672 664 673.500 640L664.500 497z" fill="url(#tank)" />
      <ellipse cx="606" cy="499" rx="58.700" ry="38" fill="#3df060" />
      <ellipse cx="605.500" cy="496.500" rx="57.500" ry="35.500" fill="#32ea52" />
      <path d="M561 573Q572 571 577 585L570 614Q560 618 555 606z" fill="url(#stub)" />
      <ellipse cx="563" cy="611" rx="7.500" ry="5.500" fill="#2cba48" stroke="#3ada58" />

      <g strokeLinejoin="round">
        <path d={run} stroke="#003dae" strokeWidth="15.500" />
        <path d={run} stroke="#0052e0" strokeWidth="13" />
        <path d={run} stroke="#0060ff" strokeWidth="9" />
        <path d="M726 535L829 538.500M863 629.500L1274 640.500M1310 347L1123 340.500" stroke="#2f7dff" strokeWidth="3" />
        <path d={run} stroke="#00b4f4" strokeWidth="1.200" />
      </g>
      <path d="M1326 413.500h10" stroke="#2f8dff" />

      <g className="font-['Lato'] font-light text-[17px]">
        <Arrow x={607} y={252} a={-92} c={Z} n={28} />
        <Arrow x={607} y={252} a={1.500} c={G} n={36} />
        <Arrow x={607} y={252} a={97} c={R} n={24} />
        <T x={592} y={222} c={Z}>Z</T><T x={610} y={249} c={M}>PORT4</T><T x={646} y={267} c={G}>Y</T><T x={591} y={289} c={R}>X</T>
        <Arrow x={883} y={261} a={-92} c={Z} n={28} />
        <Arrow x={883} y={261} a={1.500} c={G} n={36} />
        <Arrow x={883} y={261} a={99} c={R} n={24} />
        <T x={868} y={231} c={Z}>Z</T><T x={885} y={258} c={M}>PORT3</T><T x={921} y={276} c={G}>Y</T><T x={867} y={298} c={R}>X</T>
        <Arrow x={1121} y={357} a={-92} c={G} n={40} />
        <Arrow x={1123} y={349} a={-80} c={R} n={28} />
        <Arrow x={1123} y={343} a={1.500} c={Z} />
        <Arrow x={1121} y={358} a={1.500} c={Z} n={36} />
        <T x={1108} y={313} c={G}>Y</T><T x={1105} y={328} c={G}>Y</T><T x={1130} y={317} c={R}>X</T><T x={1127} y={332} c={R}>X</T>
        <T x={1070} y={356} c={M}>PORT2</T><T x={1067} y={371} c={M}>PORT1</T><T x={1162} y={358} c={Z}>Z</T><T x={1159} y={373} c={Z}>Z</T>
        <Arrow x={625} y={517} a={-80} c={Z} n={24} />
        <Arrow x={625} y={517} a={-178} c={R} n={37} />
        <Arrow x={624} y={512} a={-92} c={G} n={22} />
        <T x={631} y={491} c={Z}>Z</T><T x={610} y={487} c={G}>Y</T><T x={576} y={513} c={R}>X</T><T x={627} y={530} c={M}>PORT3</T>
        <Arrow x={726} y={534} a={-80} c={R} n={20} />
        <Arrow x={725} y={528} a={-92} c={G} n={18} />
        <Arrow x={730} y={538} a={1.500} c={Z} n={28} />
        <T x={711} y={507} c={G}>Y</T><T x={732} y={511} c={R}>X</T><T x={764} y={553} c={Z}>Z</T><T x={672} y={551} c={M}>PORT1</T>
        <Arrow x={563} y={612} a={1.500} c={R} n={37} />
        <Arrow x={563} y={612} a={98} c={Z} n={23} />
        <Arrow x={563} y={612} a={-92} c={G} n={28} />
        <T x={549} y={580} c={G}>Y</T><T x={602} y={625} c={R}>X</T><T x={547} y={648} c={Z}>Z</T><T x={566} y={608} c={M}>PORT2</T>
      </g>
      <path d="M1327.500 244.500v15l3.500-3 2.500 5 3-1.500-2.500-5h4.500z" fill="#fff" stroke="#3c3c44" strokeWidth="1.400" />
    </svg>
  );
}

function Canvas() {
  return (
    <main className="relative grow min-w-0 bg-white flex flex-col justify-between">
      <Scene />
      <div className="relative mt-[7px] mr-0.5 self-center flex items-center h-8 px-0.5 border border-[#9b9ea0] bg-[#f8f9fb]">
        {viewTools.map(([label, icon]) => (
          <button
            type="button"
            key={label}
            aria-label={label}
            className={`w-6 h-6 mx-px flex items-center justify-center border ${label === "Solid Pipe" ? "bg-[#dedfe1] border-[#abadb0]" : "border-transparent"}`}
          >
            {icon}
          </button>
        ))}
      </div>
      <p className="relative mb-[21px] pl-2.5 font-['Liberation_Sans'] text-[13px] leading-[14px] text-[#9195a1]">
        Active Piping Asm:CONNECT<br />
        Active Pipeline:PIPE1<br />
        Corner Type:Bend<br />
        Line Shape:Straight
      </p>
    </main>
  );
}

/* ---- status bar ---- */
function StatusBar() {
  return (
    <footer className="h-[37px] bg-[#f8f9f9] border-t border-[#a8b7b5] flex items-center pl-[6px] pr-[18px] text-[#47494b]">
      <div className="flex pt-1.5">
        <PBtn label="Navigator" w="w-[22px]" active><Svg><path d="M.5 1.500h15v13H.5z" fill="#fff" stroke="#888" /><path d="M.5 4.500h15" stroke="#888" /><path d="M1 5h4v10H1z" fill="#cdeaf7" stroke="#12739f" /><ellipse cx="11" cy="12.500" rx="4" ry="2.300" fill="#fff" stroke="#333" /><circle cx="11" cy="12.500" r="1.400" fill="#333" /></Svg></PBtn>
        <span className="w-0.5" />
        <PBtn label="Browser" w="w-[26px]"><Svg><circle cx="8" cy="8" r="6" fill="#3aa7dc" /><path d="M4 4q3-2 4 0t3 2q1 4-1 6-2-1-1-4-4-1-5-4z" fill="#c4e8f7" /><ellipse cx="8" cy="8" rx="9" ry="3.500" transform="rotate(-50 8 8)" stroke="#5d6163" strokeWidth="1.200" /></Svg></PBtn>
        <PBtn label="Full screen" w="w-[26px]"><Svg><rect x=".5" y=".5" width="14" height="15" fill="url(#page)" stroke="#155f86" strokeWidth="1.300" /></Svg></PBtn>
        <span className="w-px h-6 bg-[#abafb1] ml-[7px]" />
      </div>
      <div className="ml-auto flex items-center">
        <span className="w-px h-[30px] bg-[#abafb1]" />
        <span className="w-[34px] flex justify-center"><svg viewBox="0 0 26 12" className="w-[26px] h-3"><circle cx="6" cy="6" r="5.200" fill="#43cf49" /><circle cx="16" cy="6" r="3" fill="#c9cbcb" /><circle cx="23" cy="6" r="3" fill="#c9cbcb" /></svg></span>
        <span className="w-px h-[30px] bg-[#abafb1] mr-0.5" />
        <div className="flex h-6 border border-[#b3b6b8] mr-0.5">
          <button type="button" aria-label="Find" className="w-[27px] flex items-center justify-center"><Svg><path d="M3 1h3v3h3V1h3l3 8v5H9V9H7v5H0V9z" fill="#4a4c4e" /><path d="M4 4l-2 7M11 4l2 7" stroke="#a9acae" strokeWidth="2" /></Svg></button>
          <button type="button" aria-label="Find options" className="w-[14px] border-l border-[#b3b6b8] flex items-center justify-center"><Caret /></button>
        </div>
        <span className="w-px h-[30px] bg-[#abafb1]" />
        <span className="ml-[5px] w-[86px]">1 selected</span>
        <div className="relative w-[165px] h-6">
          <select aria-label="Selection filter" className="appearance-none w-full h-full border border-[#a9acae] bg-[#f6f7f7] pl-[7px] outline-none"><option>Piping items</option></select>
          <span className="absolute right-0 inset-y-0 w-[15px] border border-[#a9acae] flex items-center justify-center pointer-events-none"><Caret /></span>
        </div>
      </div>
    </footer>
  );
}

export default function App() {
  return (
    <div className="min-h-screen flex flex-col bg-white font-['Noto_Sans','Open_Sans',sans-serif] text-[11px] leading-4 text-[#4a4d50]">
      <Defs />
      <TitleBar />
      <TabBar />
      <Ribbon />
      <div className="grow flex">
        <SidePanel />
        <Canvas />
      </div>
      <StatusBar />
    </div>
  );
}
